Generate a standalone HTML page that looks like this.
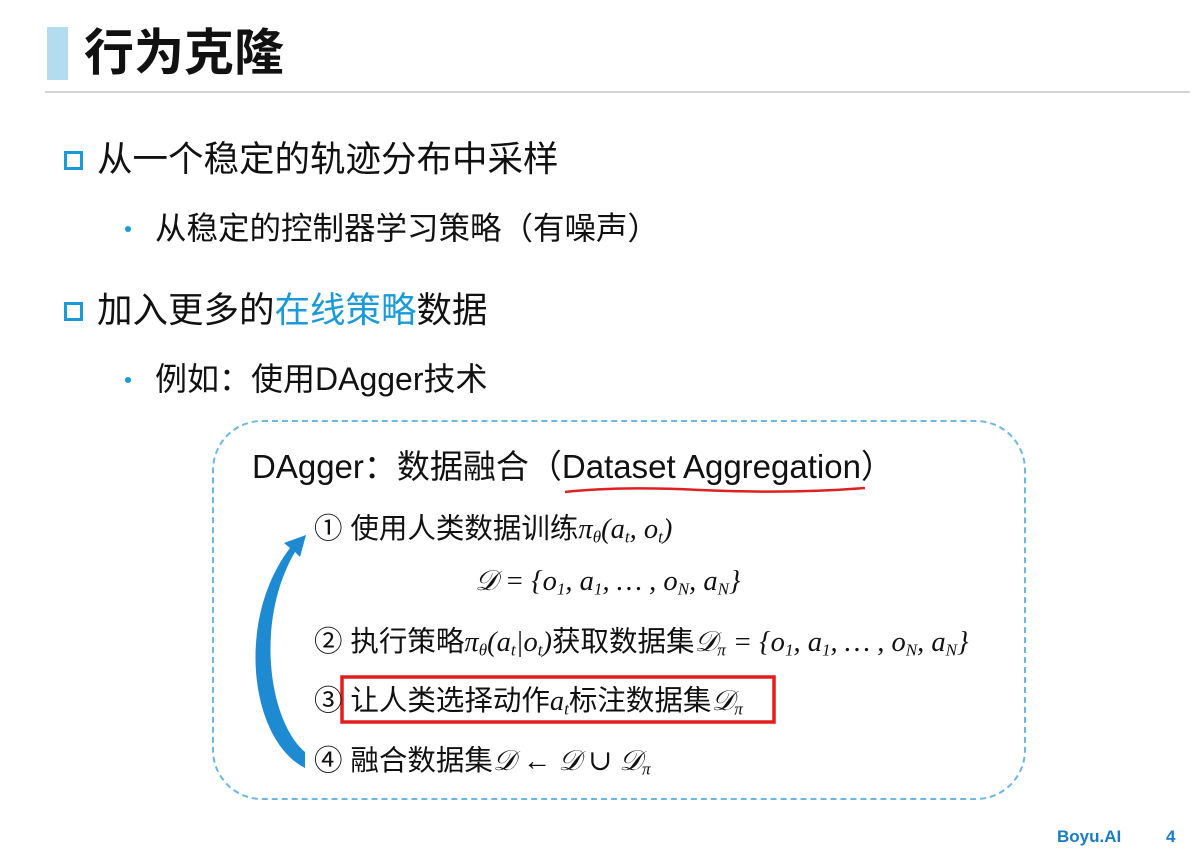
<html><head><style>
body{margin:0;width:1204px;height:849px;background:#fff;position:relative;overflow:hidden;font-family:"Liberation Sans","Noto Sans CJK SC",sans-serif;color:#111}
.a{position:absolute;white-space:nowrap;line-height:1}
.m{font-family:"Liberation Serif","DejaVu Serif",serif;font-style:italic}
sub{font-size:60%;vertical-align:-0.25em}
</style></head><body>
<div class="a" style="left:47px;top:27px;width:21px;height:53px;background:#b3dcf1"></div>
<div class="a" style="left:84px;top:28px;font-size:50px;font-weight:bold">行为克隆</div>
<div class="a" style="left:45px;top:91px;width:1145px;height:2px;background:#d4d4d4"></div>

<div class="a" style="left:64px;top:151px;width:13px;height:13px;border:3px solid #1a9ad6"></div>
<div class="a" style="left:97px;top:142px;font-size:35.5px">从一个稳定的轨迹分布中采样</div>
<div class="a" style="left:125px;top:226px;width:6px;height:6px;border-radius:3px;background:#1a9ad6"></div>
<div class="a" style="left:155px;top:213px;font-size:31.5px">从稳定的控制器学习策略（有噪声）</div>

<div class="a" style="left:64px;top:302px;width:13px;height:13px;border:3px solid #1a9ad6"></div>
<div class="a" style="left:97px;top:293px;font-size:35.5px">加入更多的<span style="color:#1a9ad6">在线策略</span>数据</div>
<div class="a" style="left:125px;top:377px;width:6px;height:6px;border-radius:3px;background:#1a9ad6"></div>
<div class="a" style="left:155px;top:363px;font-size:32px">例如：使用DAgger技术</div>

<div class="a" style="left:212px;top:420px;width:810px;height:376px;border:2px dashed #6cb8e2;border-radius:50px"></div>
<div class="a" style="left:252px;top:450px;font-size:33px">DAgger：数据融合（Dataset Aggregation）</div>
<svg class="a" style="left:0;top:0" width="1204" height="849">
<path d="M565 492 Q620 486 700 490 Q790 494 865 488" stroke="#e02020" stroke-width="2.5" fill="none"/>
<path d="M305 768 C250 740 235 620 290 548 L284 543 L306 535 L300 557 L295 552 C255 620 268 720 305 752 Z" fill="#1e8ad2"/>
<rect x="342" y="677" width="432" height="45" fill="none" stroke="#e31c1c" stroke-width="3.5"/>
</svg>
<div class="a" style="left:314px;top:515px;font-size:28.5px">① 使用人类数据训练<span class="m">π<sub>θ</sub>(a<sub>t</sub>, o<sub>t</sub>)</span></div>
<div class="a m" style="left:475px;top:568px;font-size:28.5px">𝒟 = {o<sub>1</sub>, a<sub>1</sub>, … , o<sub>N</sub>, a<sub>N</sub>}</div>
<div class="a" style="left:314px;top:628px;font-size:28.5px">② 执行策略<span class="m">π<sub>θ</sub>(a<sub>t</sub>|o<sub>t</sub>)</span>获取数据集<span class="m">𝒟<sub>π</sub> = {o<sub>1</sub>, a<sub>1</sub>, … , o<sub>N</sub>, a<sub>N</sub>}</span></div>
<div class="a" style="left:314px;top:687px;font-size:28.5px">③ 让人类选择动作<span class="m">a<sub>t</sub></span>标注数据集<span class="m">𝒟<sub>π</sub></span></div>
<div class="a" style="left:314px;top:747px;font-size:28.5px">④ 融合数据集<span class="m">𝒟 ← 𝒟 ∪ 𝒟<sub>π</sub></span></div>

<div class="a" style="left:1057px;top:828px;font-size:17px;font-weight:bold;color:#1a7cc4">Boyu.AI</div>
<div class="a" style="left:1166px;top:828px;font-size:17px;font-weight:bold;color:#1a7cc4">4</div>
</body></html>
